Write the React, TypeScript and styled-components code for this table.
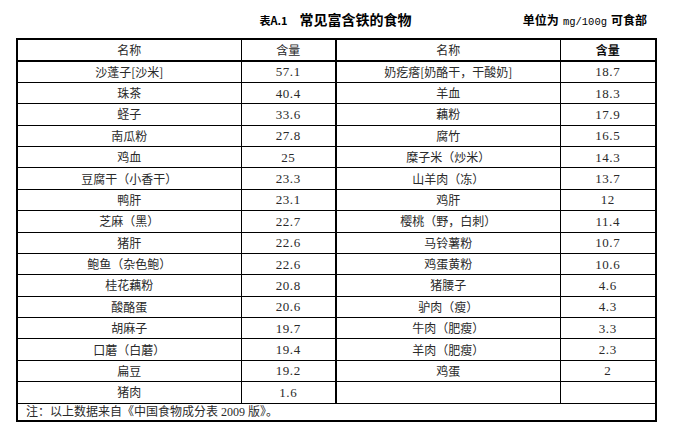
import React from "react";
import styled, { createGlobalStyle } from "styled-components";

const GlobalStyle = createGlobalStyle`
  html, body {
    margin: 0;
    padding: 0;
    background: #ffffff;
  }
  body {
    font-family: "Liberation Serif", "Noto Sans CJK SC", serif;
    color: #222;
  }
`;

type Item = [string, string];

const leftItems: Item[] = [
  ["沙蓬子[沙米]", "57.1"],
  ["珠茶", "40.4"],
  ["蛏子", "33.6"],
  ["南瓜粉", "27.8"],
  ["鸡血", "25"],
  ["豆腐干（小香干）", "23.3"],
  ["鸭肝", "23.1"],
  ["芝麻（黑）", "22.7"],
  ["猪肝", "22.6"],
  ["鲍鱼（杂色鲍）", "22.6"],
  ["桂花藕粉", "20.8"],
  ["酸酪蛋", "20.6"],
  ["胡麻子", "19.7"],
  ["口蘑（白蘑）", "19.4"],
  ["扁豆", "19.2"],
  ["猪肉", "1.6"],
];

const rightItems: Item[] = [
  ["奶疙瘩[奶酪干，干酸奶]", "18.7"],
  ["羊血", "18.3"],
  ["藕粉", "17.9"],
  ["腐竹", "16.5"],
  ["糜子米（炒米）", "14.3"],
  ["山羊肉（冻）", "13.7"],
  ["鸡肝", "12"],
  ["樱桃（野，白刺）", "11.4"],
  ["马铃薯粉", "10.7"],
  ["鸡蛋黄粉", "10.6"],
  ["猪腰子", "4.6"],
  ["驴肉（瘦）", "4.3"],
  ["牛肉（肥瘦）", "3.3"],
  ["羊肉（肥瘦）", "2.3"],
  ["鸡蛋", "2"],
  ["", ""],
];

const Page = styled.div`
  padding-left: 16px;
  width: 639px;
`;

const Caption = styled.div`
  display: grid;
  grid-template-columns: 1fr auto 1fr;
  align-items: center;
  height: 38px;
`;

const Title = styled.div`
  grid-column: 2;
  display: flex;
  align-items: baseline;
  gap: 12px;
  color: #000;
  font-family: "Noto Sans CJK SC", sans-serif;
  font-weight: 700;
`;

const TableNo = styled.span`
  font-size: 11px;
`;

const TitleText = styled.span`
  font-size: 14px;
`;

const Unit = styled.div`
  grid-column: 3;
  justify-self: end;
  padding-right: 8px;
  color: #000;
  font-family: "Noto Sans CJK SC", sans-serif;
  font-weight: 700;
  font-size: 12px;
`;

const UnitMono = styled.span`
  font-family: "Liberation Mono", monospace;
  font-weight: 400;
  font-size: 10.5px;
  margin: 0 4px;
`;

const Table = styled.table`
  width: 639px;
  table-layout: fixed;
  border-collapse: collapse;
  border: 2px solid #000;
`;

const Row = styled.tr<{ $head?: boolean }>`
  height: ${(p) => (p.$head ? "22px" : "21.375px")};
  border-bottom: ${(p) => (p.$head ? "2px" : "1px")} solid #000;
`;

const Cell = styled.td<{ $num?: boolean; $split?: boolean; $bold?: boolean }>`
  padding: 0;
  text-align: center;
  vertical-align: middle;
  border-right: ${(p) => (p.$split ? "2px" : "1px")} solid #000;
  font-family: ${(p) =>
    p.$num ? `"Liberation Serif", serif` : `"Noto Sans CJK SC", sans-serif`};
  font-size: ${(p) => (p.$num ? "13px" : "12px")};
  letter-spacing: ${(p) => (p.$num ? "0.6px" : "0")};
  font-weight: ${(p) => (p.$bold ? 700 : 400)};
  line-height: 1;
  color: ${(p) => (p.$bold ? "#111" : "#2a2a2a")};
  white-space: nowrap;
`;

const NoteCell = styled.td`
  height: 16px;
  padding: 0 0 0 8px;
  text-align: left;
  vertical-align: middle;
  font-family: "Liberation Serif", "Noto Sans CJK SC", serif;
  font-size: 12px;
  line-height: 1;
  color: #2a2a2a;
`;

export default function App() {
  return (
    <>
      <GlobalStyle />
      <Page>
        <Caption>
          <Title>
            <TableNo>表A.1</TableNo>
            <TitleText>常见富含铁的食物</TitleText>
          </Title>
          <Unit>
            单位为<UnitMono>mg/100g</UnitMono>可食部
          </Unit>
        </Caption>
        <Table>
          <colgroup>
            <col style={{ width: 224 }} />
            <col style={{ width: 95 }} />
            <col style={{ width: 224 }} />
            <col style={{ width: 96 }} />
          </colgroup>
          <tbody>
            <Row $head>
              <Cell>名称</Cell>
              <Cell $split>含量</Cell>
              <Cell>名称</Cell>
              <Cell $bold>含量</Cell>
            </Row>
            {leftItems.map((l, i) => {
              const r = rightItems[i];
              return (
                <Row key={i}>
                  <Cell>{l[0]}</Cell>
                  <Cell $num $split>
                    {l[1]}
                  </Cell>
                  <Cell>{r[0]}</Cell>
                  <Cell $num>{r[1]}</Cell>
                </Row>
              );
            })}
            <tr>
              <NoteCell colSpan={4}>
                注：以上数据来自《中国食物成分表 2009 版》。
              </NoteCell>
            </tr>
          </tbody>
        </Table>
      </Page>
    </>
  );
}
